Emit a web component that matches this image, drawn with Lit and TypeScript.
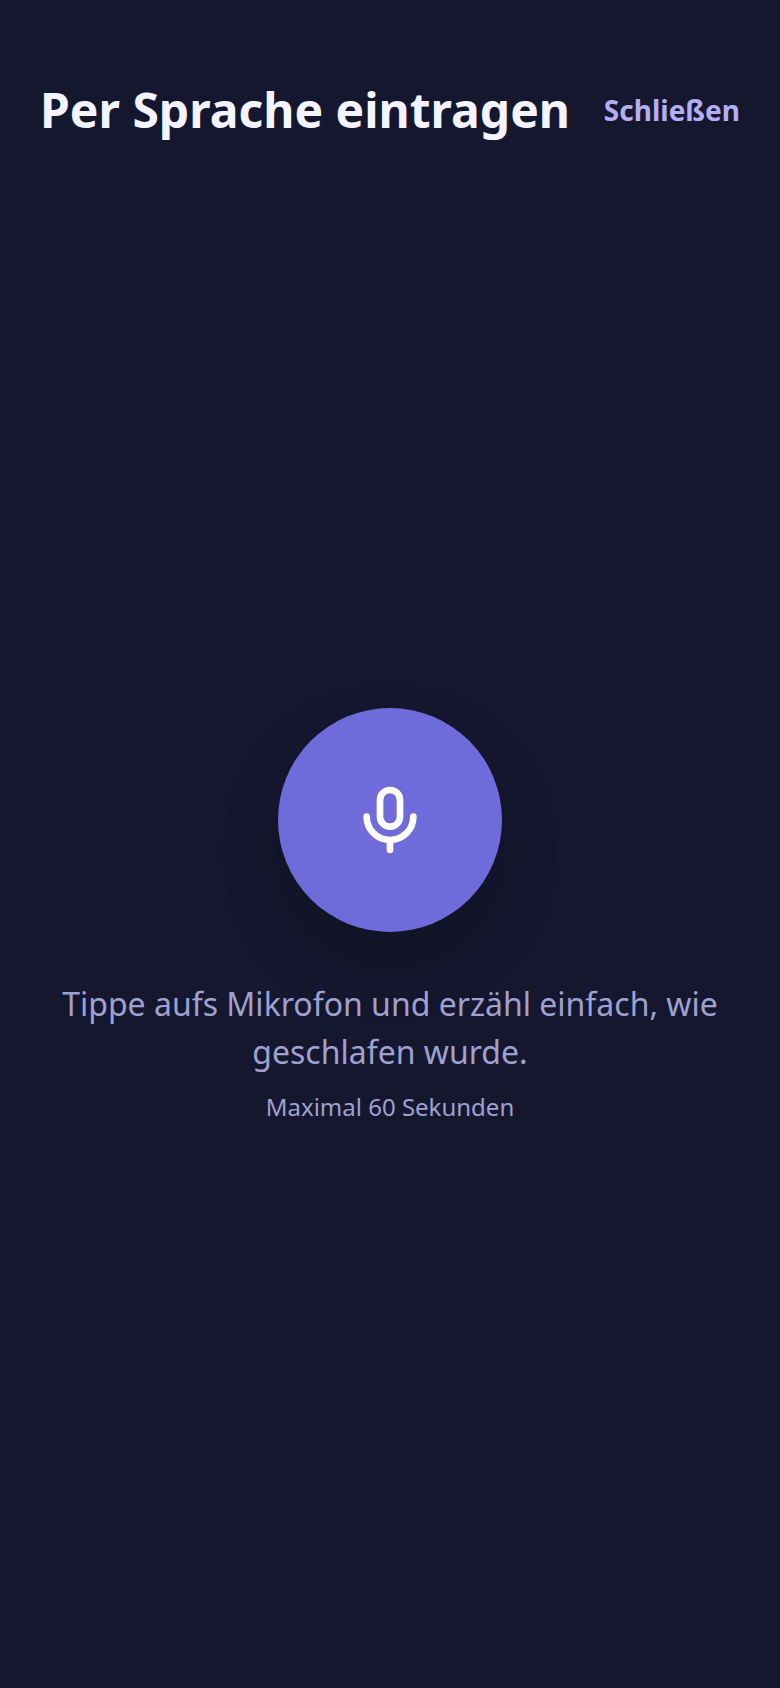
import { LitElement, html, css } from "lit";
import { customElement } from "lit/decorators.js";

@customElement("app-root")
export class AppRoot extends LitElement {
  static styles = css`
    :host {
      display: flex;
      flex-direction: column;
      box-sizing: border-box;
      min-height: 100vh;
      background: #15172f;
      color: #f3f4ff;
      font-family: "Noto Sans", sans-serif;
    }
    .header {
      display: flex;
      align-items: center;
      justify-content: space-between;
      gap: 24px;
      padding: 76px 40px 0;
    }
    .title {
      margin: 0;
      font-size: 48px;
      line-height: 67px;
      font-weight: 700;
    }
    .close {
      border: 0;
      padding: 0;
      background: none;
      color: #b5aef2;
      font: inherit;
      font-size: 28px;
      line-height: 38px;
      font-weight: 700;
      cursor: pointer;
    }
    .body {
      flex: 1;
      display: flex;
      flex-direction: column;
      align-items: center;
      justify-content: center;
      padding: 0 48px;
      text-align: center;
      color: #9fa1d0;
    }
    .mic {
      display: grid;
      place-items: center;
      width: 224px;
      height: 224px;
      margin-bottom: 48px;
      padding: 0;
      border: 0;
      border-radius: 50%;
      background: #6f6bdb;
      color: #ffffff;
      box-shadow: 0 32px 48px rgba(14, 20, 32, 0.6);
      cursor: pointer;
    }
    .icon {
      width: 80px;
      height: 80px;
    }
    .hint {
      margin: 0 0 15px;
      font-size: 32px;
      line-height: 48px;
    }
    .limit {
      margin: 0;
      font-size: 24px;
      line-height: 32px;
    }
  `;

  render() {
    return html`
      <header class="header">
        <h1 class="title">Per Sprache eintragen</h1>
        <button class="close" type="button">Schließen</button>
      </header>
      <main class="body">
        <button class="mic" type="button" aria-label="Aufnahme starten">
          <svg class="icon" viewBox="0 0 24 24" fill="none" stroke="currentColor" stroke-width="2" stroke-linecap="round" stroke-linejoin="round" aria-hidden="true">
            <rect x="9" y="3" width="6" height="11" rx="3" />
            <path d="M5 11a7 7 0 0 0 14 0M12 18v3" />
          </svg>
        </button>
        <p class="hint">Tippe aufs Mikrofon und erzähl einfach, wie geschlafen wurde.</p>
        <p class="limit">Maximal 60 Sekunden</p>
      </main>
    `;
  }
}
